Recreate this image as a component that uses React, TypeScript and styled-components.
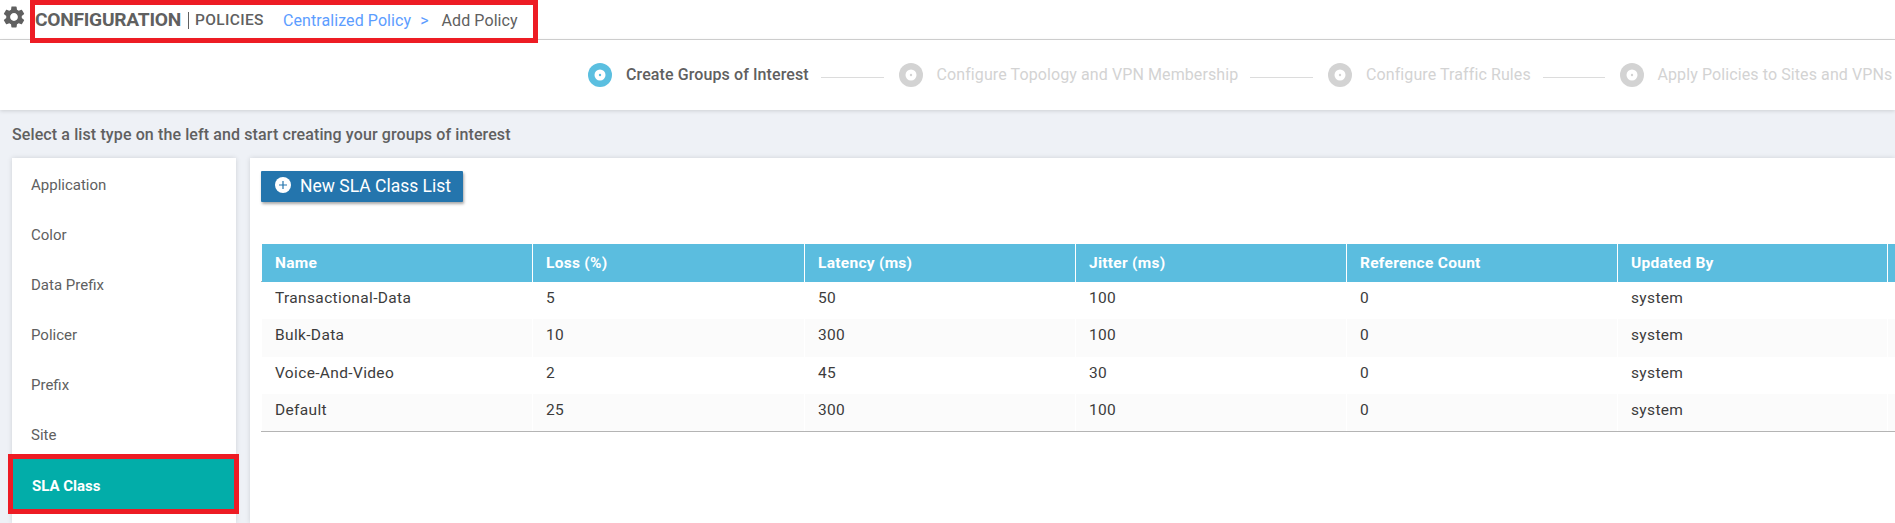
import React from "react";
import styled, { createGlobalStyle } from "styled-components";
import { MdSettings } from "react-icons/md";

const GlobalStyle = createGlobalStyle`
  * { box-sizing: border-box; }
  body {
    margin: 0;
    overflow: hidden;
    background: #eef1f6;
    color: #606060;
    font-family: Roboto, sans-serif;
    font-size: 15px;
  }
`;

const Page = styled.div`
  position: relative;
  display: flex;
  flex-direction: column;
  width: 1895px;
  height: 523px;
  overflow: hidden;
`;

const TitleBar = styled.header`
  display: flex;
  align-items: flex-start;
  height: 40px;
  border-bottom: 1px solid #d4d4d4;
  background: #fff;
  white-space: nowrap;
`;

const GearIcon = styled(MdSettings)`
  width: 26px;
  height: 26px;
  margin: 4px 8px 0 1px;
  flex: none;
`;

const Title = styled.h1`
  margin: 0;
  width: 153px;
  font-size: 19.2px;
  line-height: 39px;
  font-weight: 700;
  letter-spacing: -0.27px;
`;

const Section = styled.span`
  margin-left: 6px;
  width: 70px;
  font-size: 15.5px;
  line-height: 40px;
  font-weight: 500;
  letter-spacing: 0.35px;
`;

const Divider = styled.i`
  width: 1px;
  height: 17px;
  margin-top: 12px;
  background: #606060;
`;

const Crumb = styled.span<{ $link?: boolean; $left: number }>`
  margin-left: ${(p) => p.$left}px;
  color: ${(p) => (p.$link ? "#5c9dff" : "#606060")};
  font-size: 16px;
  line-height: 42px;
  letter-spacing: 0.08px;
`;

const Wizard = styled.nav`
  position: relative;
  display: flex;
  align-items: center;
  height: 70px;
  padding: 0 0 0 588px;
  background: #fff;
  box-shadow: 0 1px 4px rgba(0, 0, 0, 0.14);
`;

const Step = styled.div<{ $active?: boolean; $width: number }>`
  display: flex;
  align-items: center;
  flex: none;
  width: ${(p) => p.$width}px;
  color: ${(p) => (p.$active ? "#5bbfe0" : "#d3d3d3")};
`;

const StepLabel = styled.span<{ $active?: boolean }>`
  margin-left: 14px;
  flex: none;
  color: ${(p) => (p.$active ? "#606060" : "#d3d3d3")};
  font-size: 16px;
  line-height: 24px;
  font-weight: ${(p) => (p.$active ? 500 : 400)};
  letter-spacing: 0.1px;
  white-space: nowrap;
`;

const Connector = styled.i`
  height: 1px;
  flex: 1;
  margin: 5px 15px 0 12px;
  background: #dcdcdc;
`;

const Hint = styled.p`
  margin: 0;
  height: 48px;
  padding-left: 12px;
  font-size: 16px;
  line-height: 50px;
  font-weight: 500;
  letter-spacing: 0.11px;
`;

const Body = styled.div`
  display: flex;
  flex: 1;
  gap: 14px;
  padding-left: 12px;
`;

const Sidebar = styled.aside`
  width: 224px;
  flex: none;
  background: #fff;
  box-shadow: 0 0 5px rgba(0, 0, 0, 0.13);
`;

const SideItem = styled.div<{ $active?: boolean }>`
  display: flex;
  align-items: center;
  height: ${(p) => (p.$active ? 60 : 50)}px;
  margin-top: ${(p) => (p.$active ? -4 : 0)}px;
  padding: ${(p) => (p.$active ? "4px 0 0 20px" : "4px 0 0 19px")};
  background: ${(p) => (p.$active ? "#02ada9" : "transparent")};
  color: ${(p) => (p.$active ? "#fff" : "#606060")};
  font-size: 15px;
  font-weight: ${(p) => (p.$active ? 700 : 400)};
`;

const Main = styled.main`
  display: flex;
  flex-direction: column;
  align-items: flex-start;
  flex: 1;
  padding: 13px 0 0 11px;
  background: #fff;
  box-shadow: 0 0 5px rgba(0, 0, 0, 0.13);
`;

const NewButton = styled.button`
  display: flex;
  align-items: center;
  gap: 9px;
  width: 202px;
  height: 31px;
  padding: 0 0 1px 14px;
  border: 0;
  border-radius: 1px;
  background: #2475ad;
  color: #fff;
  box-shadow: 1px 2px 3px rgba(0, 0, 0, 0.35);
  font: 400 17.5px/28px Roboto, sans-serif;
  white-space: nowrap;

  svg { flex: none; margin-top: -3px; }
`;

const Table = styled.div`
  width: 1634px;
  margin-top: 42px;
  border-bottom: 1px solid #b4b4b4;
`;

const Row = styled.div<{ $height: number }>`
  display: grid;
  grid-template-columns: 272px 272px repeat(3, 271px) 270px 271px;
  height: ${(p) => p.$height}px;
`;

const HeadRow = styled(Row)`
  border-bottom: 1px solid #b4b4b4;
`;

const Cell = styled.div<{ $shade?: boolean }>`
  padding-left: 13px;
  border-right: 1px solid #fff;
  background: ${(p) => (p.$shade ? "#fbfbfb" : "#fff")};
  color: #3c3c3c;
  font-size: 15.5px;
  line-height: 32px;
  letter-spacing: 0.35px;

  &:first-child { margin-left: 1px; }
`;

const HeadCell = styled(Cell)`
  background: #5bbddf;
  color: #fff;
  font-weight: 700;
  font-size: 15.5px;
  line-height: 38px;
  letter-spacing: 0.28px;
`;

const Highlight = styled.div<{ $x: number; $y: number; $w: number; $h: number }>`
  position: absolute;
  left: ${(p) => p.$x}px;
  top: ${(p) => p.$y}px;
  width: ${(p) => p.$w}px;
  height: ${(p) => p.$h}px;
  border: 5px solid #ed1c24;
`;

const StepDot = () => (
  <svg width="24" height="24" viewBox="0 0 24 24">
    <circle cx="12" cy="12" r="12" fill="currentColor" />
    <circle cx="12" cy="12" r="5.5" fill="#fff" />
    <circle cx="12" cy="12" r="1.2" fill="currentColor" />
  </svg>
);

const PlusIcon = () => (
  <svg width="16" height="16" viewBox="0 0 16 16">
    <circle cx="8" cy="8" r="8" fill="#fff" />
    <path d="M8 4v8M4 8h8" stroke="#2475ad" strokeWidth="1.2" />
  </svg>
);

const steps = [
  { label: "Create Groups of Interest", width: 310.5 },
  { label: "Configure Topology and VPN Membership", width: 429.5 },
  { label: "Configure Traffic Rules", width: 291.5 },
  { label: "Apply Policies to Sites and VPNs", width: 276 },
];

const listTypes = ["Application", "Color", "Data Prefix", "Policer", "Prefix", "Site", "SLA Class"];

const columns = ["Name", "Loss (%)", "Latency (ms)", "Jitter (ms)", "Reference Count", "Updated By", ""];

const rows = [
  ["Transactional-Data", "5", "50", "100", "0", "system", ""],
  ["Bulk-Data", "10", "300", "100", "0", "system", ""],
  ["Voice-And-Video", "2", "45", "30", "0", "system", ""],
  ["Default", "25", "300", "100", "0", "system", ""],
];

const rowHeights = [37, 38, 37, 37];

export default function App() {
  return (
    <Page>
      <GlobalStyle />
      <TitleBar>
        <GearIcon />
        <Title>CONFIGURATION</Title>
        <Divider />
        <Section>POLICIES</Section>
        <Crumb $link $left={18}>Centralized Policy</Crumb>
        <Crumb $link $left={9}>&gt;</Crumb>
        <Crumb $left={13}>Add Policy</Crumb>
      </TitleBar>
      <Wizard>
        {steps.map((s, i) => (
          <Step key={s.label} $active={i === 0} $width={s.width}>
            <StepDot />
            <StepLabel $active={i === 0}>{s.label}</StepLabel>
            {i < steps.length - 1 && <Connector />}
          </Step>
        ))}
      </Wizard>
      <Hint>Select a list type on the left and start creating your groups of interest</Hint>
      <Body>
        <Sidebar>
          {listTypes.map((t) => (
            <SideItem key={t} $active={t === "SLA Class"}>{t}</SideItem>
          ))}
        </Sidebar>
        <Main>
          <NewButton><PlusIcon />New SLA Class List</NewButton>
          <Table>
            <HeadRow $height={38}>
              {columns.map((c, i) => <HeadCell key={i}>{c}</HeadCell>)}
            </HeadRow>
            {rows.map((r, i) => (
              <Row key={r[0]} $height={rowHeights[i]}>
                {r.map((v, j) => <Cell key={j} $shade={i % 2 === 1}>{v}</Cell>)}
              </Row>
            ))}
          </Table>
        </Main>
      </Body>
      <Highlight $x={30} $y={0} $w={508} $h={43} />
      <Highlight $x={8} $y={454} $w={231} $h={60} />
    </Page>
  );
}
